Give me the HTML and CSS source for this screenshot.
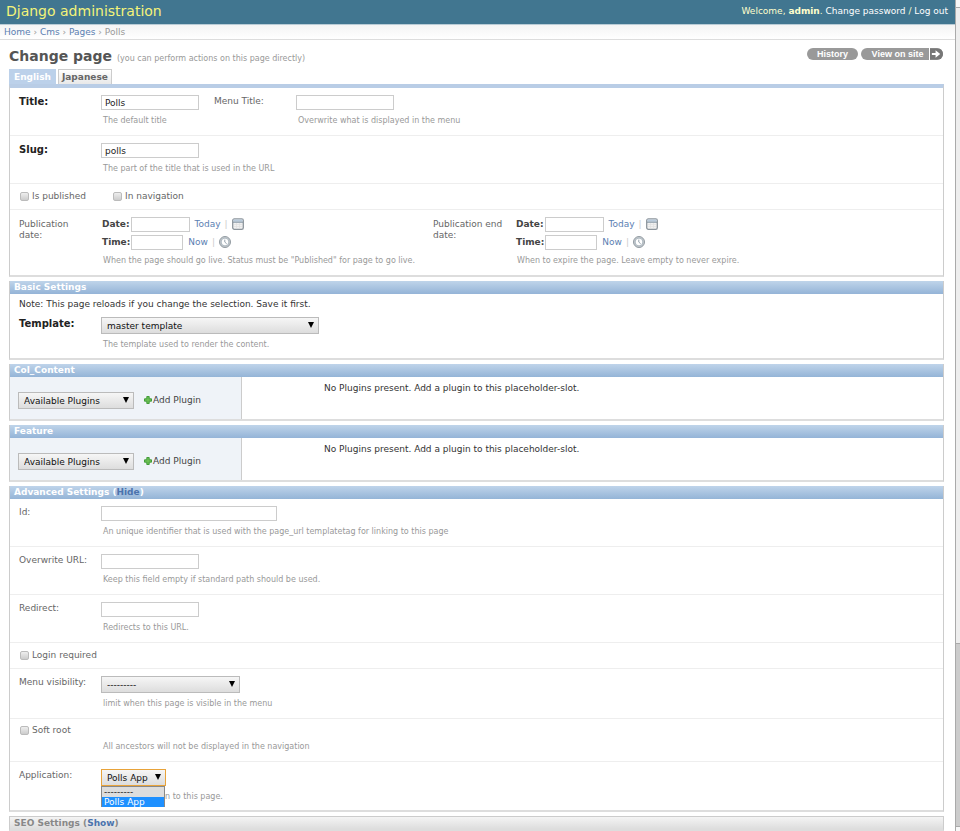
FILE: index.html
```html
<!DOCTYPE html>
<html lang="en">
<head>
<meta charset="utf-8">
<title>Change page | Django administration</title>
<link rel="stylesheet" href="styles.css">
</head>
<body>
<svg class="defs" aria-hidden="true">
  <symbol id="icon-calendar" viewBox="0 0 12 12">
    <rect x=".7" y=".9" width="10.6" height="10.4" rx="1.6" fill="#f1f1f1" stroke="#8d959c" stroke-width="1.3"/>
    <rect x="1.4" y="1.5" width="9.2" height="2.2" fill="#b9cbdc"/>
    <path d="M1 4.2h10" stroke="#7f909f"/>
    <path d="M2 6.5h8M2 8.5h8M4.5 5v5.5M7.5 5v5.5" stroke="#dedede" stroke-width=".6"/>
  </symbol>
  <symbol id="icon-clock" viewBox="0 0 12 12">
    <circle cx="6" cy="6" r="5.5" fill="#c6cbcf" stroke="#929ba2"/>
    <circle cx="6" cy="6" r="3.9" fill="#fff" stroke="#9ba8b3" stroke-width=".8"/>
    <path d="M5.8 3.6v2.5l1.9 1.7" fill="none" stroke="#8a98a4" stroke-width=".9"/>
  </symbol>
  <symbol id="icon-add" viewBox="0 0 8 8">
    <path d="M2.8.5h2.4v2.3h2.3v2.4H5.2v2.3H2.8V5.2H.5V2.8h2.3z" fill="#6cbf54" stroke="#38962f" stroke-width=".9"/>
  </symbol>
</svg>
<div class="window">
  <div class="page">
    <header class="header">
      <div class="brand">Django administration</div>
      <div class="user-tools">Welcome, <strong>admin</strong>. <a href="#">Change password</a> / <a href="#">Log out</a></div>
    </header>
    <nav class="breadcrumbs"><a href="#">Home</a> › <a href="#">Cms</a> › <a href="#">Pages</a> › Polls</nav>
    <main class="content">
      <div class="titlebar">
        <h1>Change page <small>(you can perform actions on this page directly)</small></h1>
        <div class="tools">
          <a class="tool" href="#">History</a>
          <a class="tool tool-site" href="#"><span>View on site</span><svg viewBox="0 0 14 12" aria-hidden="true"><path d="M0 0h14v12H0z" fill="#777"/><path d="M2 5h4V2l5 4-5 4V7H2z" fill="#fff"/></svg></a>
        </div>
      </div>
      <div class="tabs">
        <button type="button" class="tab tab-active">English</button>
        <button type="button" class="tab">Japanese</button>
      </div>
      <form>
        <section class="module module-main">
          <div class="row row-text pair">
            <div class="field">
              <label class="required" for="title">Title:</label>
              <div><input type="text" id="title" value="Polls"><p class="help">The default title</p></div>
            </div>
            <div class="field">
              <label for="menu-title">Menu Title:</label>
              <div><input type="text" id="menu-title"><p class="help">Overwrite what is displayed in the menu</p></div>
            </div>
          </div>
          <div class="row row-text">
            <div class="field">
              <label class="required" for="slug">Slug:</label>
              <div><input type="text" id="slug" value="polls"><p class="help">The part of the title that is used in the URL</p></div>
            </div>
          </div>
          <div class="row row-check">
            <label class="check"><input type="checkbox">Is published</label>
            <label class="check"><input type="checkbox">In navigation</label>
          </div>
          <div class="row row-dates">
            <div class="field">
              <span class="label">Publication date:</span>
              <div>
                <div class="stamp"><label for="pub-date">Date:</label><input type="text" class="date" id="pub-date"><a href="#">Today</a><i>|</i><svg aria-hidden="true"><use href="#icon-calendar"/></svg></div>
                <div class="stamp"><label for="pub-time">Time:</label><input type="text" class="time" id="pub-time"><a href="#">Now</a><i>|</i><svg aria-hidden="true"><use href="#icon-clock"/></svg></div>
                <p class="help">When the page should go live. Status must be "Published" for page to go live.</p>
              </div>
            </div>
            <div class="field">
              <span class="label">Publication end date:</span>
              <div>
                <div class="stamp"><label for="end-date">Date:</label><input type="text" class="date" id="end-date"><a href="#">Today</a><i>|</i><svg aria-hidden="true"><use href="#icon-calendar"/></svg></div>
                <div class="stamp"><label for="end-time">Time:</label><input type="text" class="time" id="end-time"><a href="#">Now</a><i>|</i><svg aria-hidden="true"><use href="#icon-clock"/></svg></div>
                <p class="help">When to expire the page. Leave empty to never expire.</p>
              </div>
            </div>
          </div>
        </section>

        <section class="module">
          <h2>Basic Settings</h2>
          <p class="note">Note: This page reloads if you change the selection. Save it first.</p>
          <div class="row row-template">
            <div class="field">
              <label class="required" for="template">Template:</label>
              <div><span class="select select-xl"><select id="template"><option>master template</option></select></span><p class="help">The template used to render the content.</p></div>
            </div>
          </div>
        </section>

        <section class="module">
          <h2>Col_Content</h2>
          <div class="placeholder">
            <div class="picker"><span class="select select-md"><select aria-label="Col_Content plugins"><option>Available Plugins</option></select></span><button type="button" class="add"><svg aria-hidden="true"><use href="#icon-add"/></svg>Add Plugin</button></div>
            <p>No Plugins present. Add a plugin to this placeholder-slot.</p>
          </div>
        </section>

        <section class="module">
          <h2>Feature</h2>
          <div class="placeholder">
            <div class="picker"><span class="select select-md"><select aria-label="Feature plugins"><option>Available Plugins</option></select></span><button type="button" class="add"><svg aria-hidden="true"><use href="#icon-add"/></svg>Add Plugin</button></div>
            <p>No Plugins present. Add a plugin to this placeholder-slot.</p>
          </div>
        </section>

        <section class="module">
          <h2>Advanced Settings (<a href="#">Hide</a>)</h2>
          <div class="row row-text">
            <div class="field">
              <label for="page-id">Id:</label>
              <div><input type="text" class="wide" id="page-id"><p class="help">An unique identifier that is used with the page_url templatetag for linking to this page</p></div>
            </div>
          </div>
          <div class="row row-text">
            <div class="field">
              <label for="overwrite">Overwrite URL:</label>
              <div><input type="text" id="overwrite"><p class="help">Keep this field empty if standard path should be used.</p></div>
            </div>
          </div>
          <div class="row row-text">
            <div class="field">
              <label for="redirect">Redirect:</label>
              <div><input type="text" id="redirect"><p class="help">Redirects to this URL.</p></div>
            </div>
          </div>
          <div class="row row-check">
            <label class="check"><input type="checkbox">Login required</label>
          </div>
          <div class="row row-select">
            <div class="field">
              <label for="visibility">Menu visibility:</label>
              <div><span class="select select-lg"><select id="visibility"><option>---------</option></select></span><p class="help">limit when this page is visible in the menu</p></div>
            </div>
          </div>
          <div class="row row-root">
            <label class="check"><input type="checkbox">Soft root</label>
            <p class="help">All ancestors will not be displayed in the navigation</p>
          </div>
          <div class="row row-app">
            <div class="field">
              <label for="application">Application:</label>
              <div class="open">
                <span class="select select-sm"><select id="application"><option>Polls App</option></select></span>
                <ul class="options" role="listbox" aria-label="Application"><li role="option">---------</li><li role="option" class="chosen" aria-selected="true">Polls App</li></ul>
                <p class="help">Hook application to this page.</p>
              </div>
            </div>
          </div>
        </section>

        <section class="module collapsed">
          <h2>SEO Settings (<a href="#">Show</a>)</h2>
        </section>
      </form>
    </main>
  </div>
  <div class="scrollbar" aria-hidden="true"><div class="scroll-up"></div><div class="scroll-track"></div><div class="scroll-thumb"></div><div class="scroll-down"></div></div>
</div>
</body>
</html>
```
FILE: styles.css
```css
* { box-sizing: border-box; }
body { margin: 0; background: #fff; color: #666; font: 9px/12px "DejaVu Sans", Verdana, sans-serif; overflow: hidden; }
h1, h2, p, ul { margin: 0; padding: 0; }
a { color: #5b80b2; text-decoration: none; }
input, select, button { font: inherit; color: #222; margin: 0; }
.defs { position: absolute; width: 0; height: 0; }
.window { display: flex; height: 100vh; }
.page { flex: 1; min-width: 0; overflow: hidden; }

.header { display: flex; justify-content: space-between; align-items: center; height: 25px; padding: 0 7px 3px 6px; background: #417690; border-bottom: 1px solid #b9ccd6; color: #ffc; }
.brand { color: #f4f379; font-size: 14px; line-height: 20px; }
.user-tools a { color: #fff; }
.breadcrumbs { height: 15px; padding: 1px 4px; border-bottom: 1px solid #ddd; background: linear-gradient(#f4f4f4, #fff); color: #999; }

.content { padding: 6px 11px 0 9px; }
.titlebar { display: flex; justify-content: space-between; height: 23px; }
h1 { font-size: 14px; line-height: 20px; color: #555; }
h1 small { font-size: 8px; font-weight: normal; color: #999; }
.tools { display: flex; gap: 3px; padding: 2px 1px 0 0; }
.tool { display: flex; align-items: center; justify-content: center; width: 51px; height: 12px; border-radius: 6px; overflow: hidden; background: #999; color: #fff; font: bold 9px/12px "Liberation Sans", Arial, sans-serif; }
.tool-site { width: 82px; }
.tool-site span { flex: 1; padding-left: 5px; text-align: center; }
.tool-site svg { width: 14px; height: 12px; border-left: 1px solid #fff; }
.tabs { display: flex; gap: 2px; height: 15px; }
.tab { padding: 0 3px; border: 1px solid #ccc; border-bottom: 0; background: linear-gradient(#fff, #e8e8e8); color: #666; font-weight: bold; line-height: 14px; }
.tab-active { padding: 0 4px; border-color: #bcd1ea; background: #bcd1ea; color: #fff; }

.module { margin-bottom: 4px; border: 1px solid #ccc; border-top: 0; border-bottom: 2px solid #ddd; }
.module-main { border-top: 4px solid #b9cde6; }
h2 { height: 13px; padding: 0 4px; background: linear-gradient(#bfd4ea, #94b4d7); color: #fff; font-size: 9px; line-height: 13px; }
.row { padding: 0 9px; border-bottom: 1px solid #eee; }
.row:last-child { border-bottom: 0; }
.row-text { height: 48px; padding-top: 7px; }
.row-check { display: flex; height: 26px; padding-top: 6px; }
.row-dates { display: grid; grid-template-columns: 414px 1fr; height: 65px; padding-top: 5px; }
.row-template { height: 48px; padding-top: 7px; }
.row-select { height: 50px; padding-top: 7px; }
.row-root { height: 43px; padding-top: 5px; }
.row-app { height: 48px; padding-top: 7px; }
.pair { display: flex; }
.pair .field:first-child { width: 195px; }
.field { display: grid; grid-template-columns: 82px 1fr; }
.field > label, .label { padding-top: 1px; line-height: 11px; }
.field > .label { padding: 4px 8px 0 0; }
.field .required { font-size: 10px; font-weight: bold; color: #222; }
.help { padding-left: 2px; color: #999; font-size: 8px; line-height: 12px; }
input[type="text"] { display: block; width: 98px; height: 15px; padding: 0 3px; border: 1px solid #ccc; background: #fff; }
input[type="text"] + .help { margin-top: 5px; }
input.wide { width: 176px; }
.check { display: flex; gap: 3px; width: 93px; padding-left: 1px; line-height: 12px; }
.check input { appearance: none; width: 9px; height: 9px; margin-top: 2px; border: 1px solid #bbb; border-radius: 2px; background: linear-gradient(#eee, #ccc); }
.row-root .help { margin-left: 82px; margin-top: 5px; }
.stamp { display: flex; align-items: center; height: 18px; padding-left: 1px; }
.stamp label { color: #444; font-weight: bold; }
.stamp input { margin-left: 1px; }
.stamp .date { width: 59px; }
.stamp .time { width: 52px; }
.stamp a { margin-left: 5px; }
.stamp i { margin: 0 4px; color: #ccc; font-style: normal; }
.stamp svg { width: 12px; height: 12px; }
.row-dates .help { margin-top: 4px; }
.note { padding: 4px 9px 0; color: #333; }

.select { position: relative; display: block; }
.select select { appearance: none; display: block; width: 100%; height: 17px; padding: 0 5px; border: 1px solid #bbb; border-radius: 0; background: linear-gradient(#f6f6f6, #ddd); color: #111; }
.select::after { content: ""; position: absolute; top: 5px; right: 5px; border: 3px solid transparent; border-top: 6px solid #000; border-bottom: 0; }
.select + .help { margin-top: 5px; }
.select-xl { width: 218px; }
.select-lg { width: 139px; }
.select-md { width: 116px; }
.select-sm { width: 65px; }
.open { position: relative; }
.open .select select { border-color: #e8a33a; outline: 0; }
.open .help { margin-top: 5px; }
.options { position: absolute; top: 17px; left: 0; width: 64px; border: 1px solid #888; border-bottom: 0; list-style: none; background: #ddd; color: #222; line-height: 10px; }
.options li { padding-left: 2px; }
.options .chosen { background: #1e90ff; color: #fff; }

.placeholder { display: flex; height: 42px; color: #333; }
.picker { display: flex; width: 232px; padding: 15px 0 0 8px; border-right: 1px solid #ccc; background: #eff3f8; }
.placeholder p { padding: 5px 82px; }
.add { display: flex; align-items: center; height: 16px; padding: 0; margin-left: 10px; border: 0; background: none; color: #444; }
.add svg { width: 8px; height: 8px; margin-right: 1px; }
.collapsed h2 { border-top: 1px solid #ccc; background: linear-gradient(#f4f4f4, #ddd); color: #888; }
h2 a { color: #4b73ad; }

.scrollbar { display: flex; flex-direction: column; width: 5px; border-left: 1px solid #aaa; background: #eee; }
.scroll-up { height: 8px; background: #f8f8f8; border-bottom: 1px solid #aaa; }
.scroll-track { flex: 638; }
.scroll-thumb { flex: 183; border: solid #aaa; border-width: 1px 0; background: #ccc; }
.scroll-down { height: 4px; background: #f8f8f8; }
```
